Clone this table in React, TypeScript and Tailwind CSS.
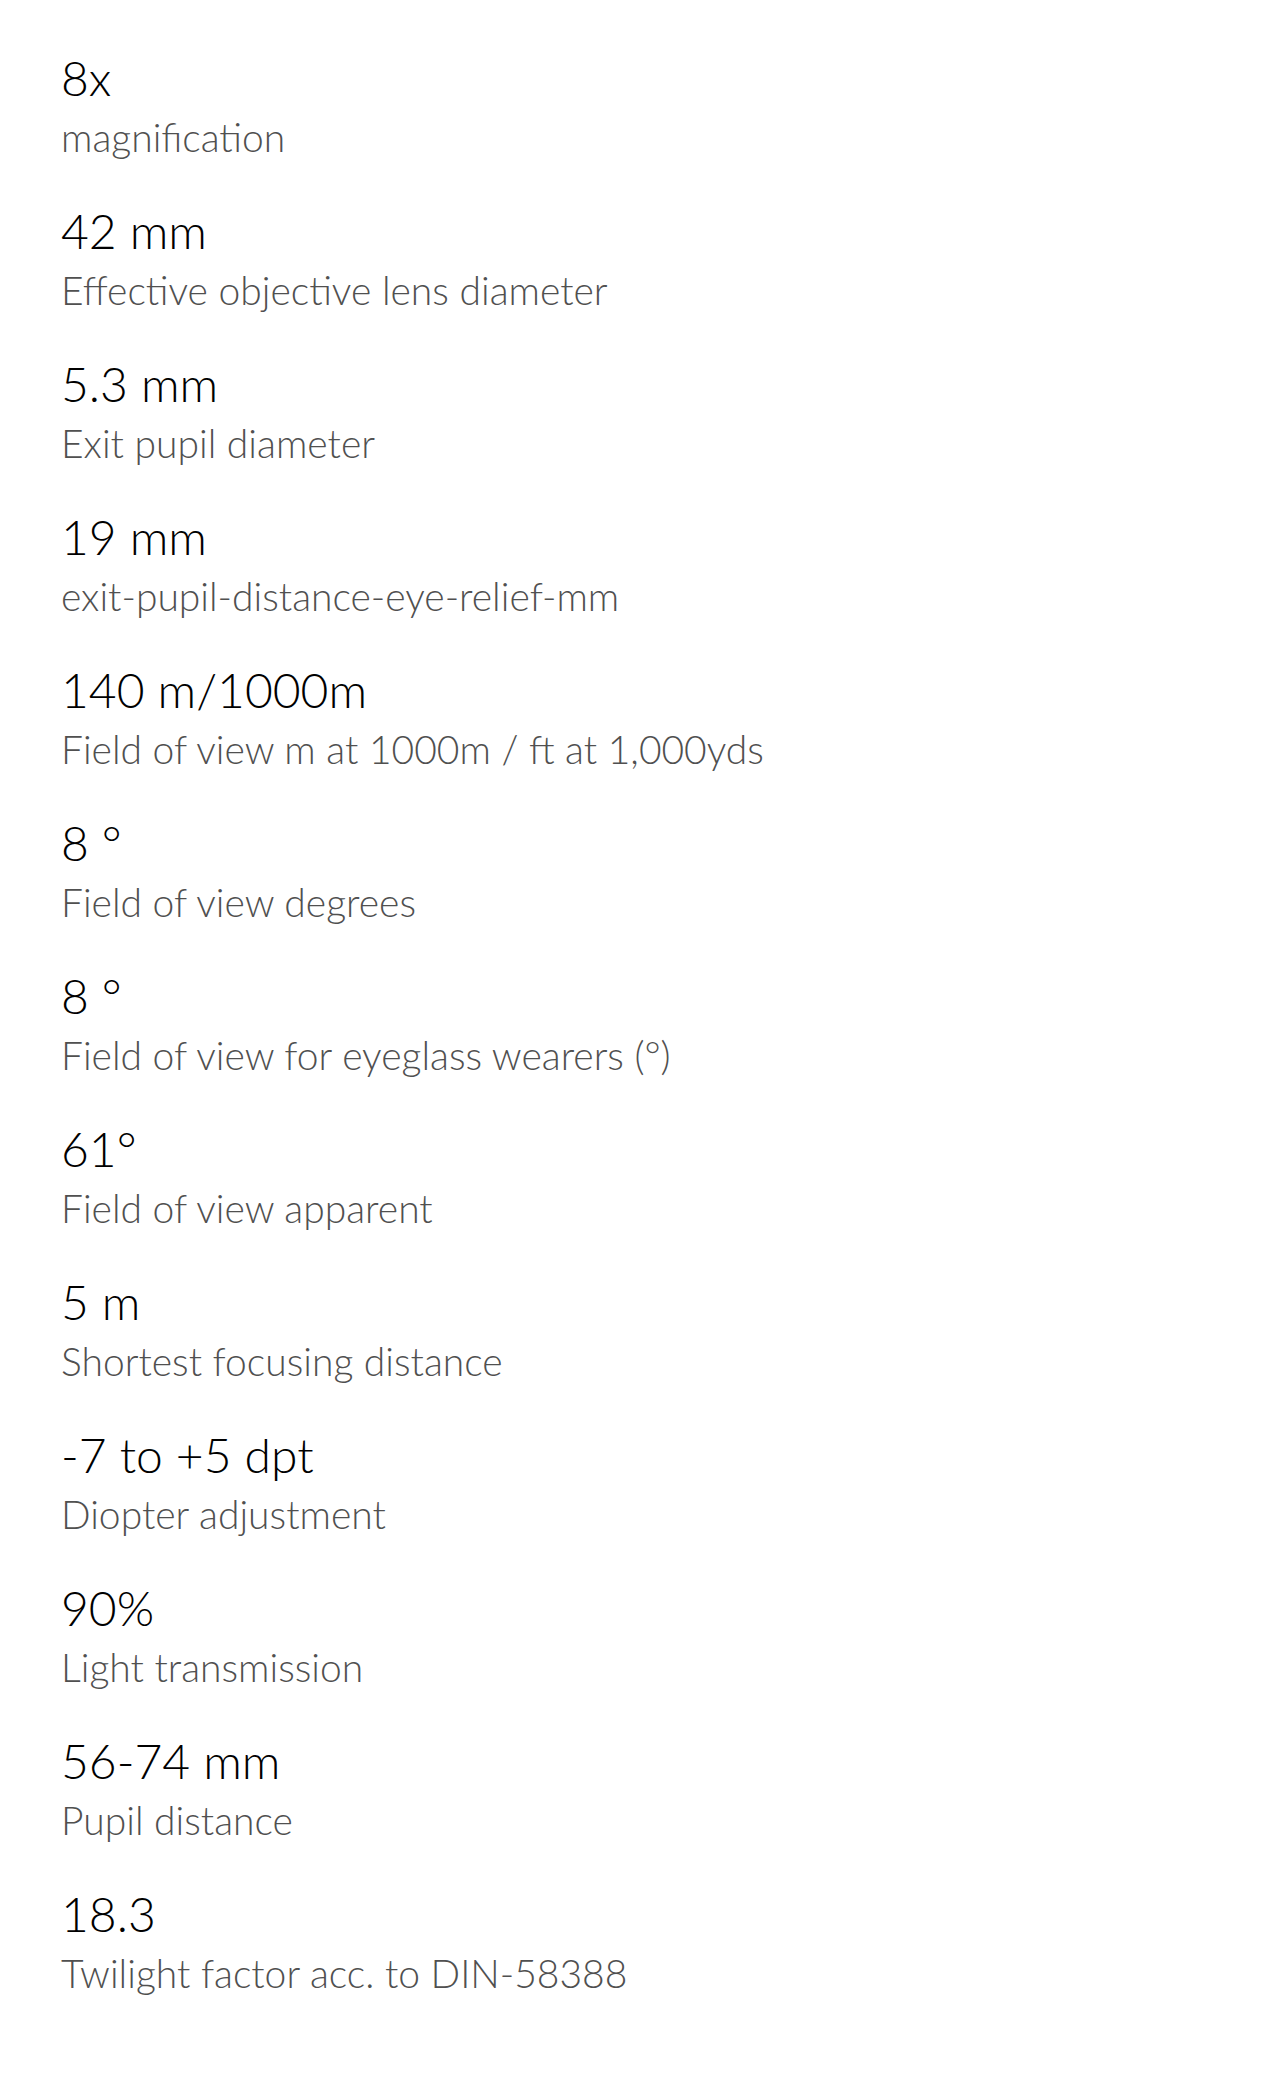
const specs = [
  { value: "8x", label: "magnification" },
  { value: "42 mm", label: "Effective objective lens diameter" },
  { value: "5.3 mm", label: "Exit pupil diameter" },
  { value: "19 mm", label: "exit-pupil-distance-eye-relief-mm" },
  { value: "140 m/1000m", label: "Field of view m at 1000m / ft at 1,000yds" },
  { value: "8 °", label: "Field of view degrees" },
  { value: "8 °", label: "Field of view for eyeglass wearers (°)" },
  { value: "61°", label: "Field of view apparent" },
  { value: "5 m", label: "Shortest focusing distance" },
  { value: "-7 to +5 dpt", label: "Diopter adjustment" },
  { value: "90%", label: "Light transmission" },
  { value: "56-74 mm", label: "Pupil distance" },
  { value: "18.3", label: "Twilight factor acc. to DIN-58388" },
];

export default function App() {
  return (
    <div className="min-h-screen bg-white pl-[61px] pt-[52px] pb-10 font-['Lato',sans-serif] font-light">
      {specs.map((s, i) => (
        <div key={i} className="mb-[42px]">
          <div className="text-[48px] leading-[52px] text-black">{s.value}</div>
          <div className="mt-[7px] text-[39px] leading-[52px] text-[#505050]">{s.label}</div>
        </div>
      ))}
    </div>
  );
}
